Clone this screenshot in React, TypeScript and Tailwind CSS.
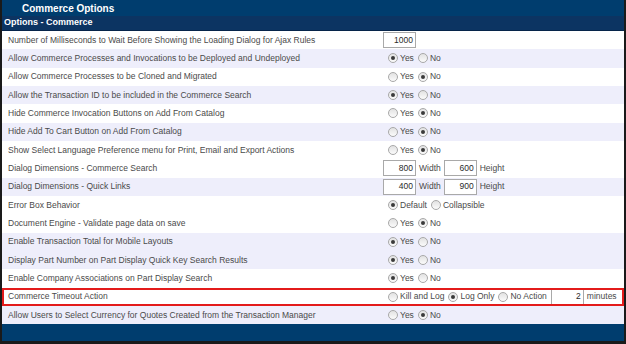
import React from "react";

type Row = {
  label: string;
  shade?: boolean;
  kind: "yesno" | "number" | "dims" | "errorbox" | "timeout";
  value?: string;
  w?: string;
  h?: string;
  yes?: boolean;
  highlight?: boolean;
};

const rows: Row[] = [
  { label: "Number of Milliseconds to Wait Before Showing the Loading Dialog for Ajax Rules", kind: "number", value: "1000" },
  { label: "Allow Commerce Processes and Invocations to be Deployed and Undeployed", kind: "yesno", yes: true, shade: true },
  { label: "Allow Commerce Processes to be Cloned and Migrated", kind: "yesno", yes: false },
  { label: "Allow the Transaction ID to be included in the Commerce Search", kind: "yesno", yes: true, shade: true },
  { label: "Hide Commerce Invocation Buttons on Add From Catalog", kind: "yesno", yes: false },
  { label: "Hide Add To Cart Button on Add From Catalog", kind: "yesno", yes: false, shade: true },
  { label: "Show Select Language Preference menu for Print, Email and Export Actions", kind: "yesno", yes: false },
  { label: "Dialog Dimensions - Commerce Search", kind: "dims", w: "800", h: "600" },
  { label: "Dialog Dimensions - Quick Links", kind: "dims", w: "400", h: "900", shade: true },
  { label: "Error Box Behavior", kind: "errorbox" },
  { label: "Document Engine - Validate page data on save", kind: "yesno", yes: false },
  { label: "Enable Transaction Total for Mobile Layouts", kind: "yesno", yes: true, shade: true },
  { label: "Display Part Number on Part Display Quick Key Search Results", kind: "yesno", yes: true, shade: true },
  { label: "Enable Company Associations on Part Display Search", kind: "yesno", yes: true },
  { label: "Commerce Timeout Action", kind: "timeout", highlight: true },
  { label: "Allow Users to Select Currency for Quotes Created from the Transaction Manager", kind: "yesno", yes: false, shade: true },
];

function Radio({ on }: { on?: boolean }) {
  return (
    <span className="inline-flex items-center justify-center w-[10px] h-[10px] rounded-full border border-[#a8a8a8] bg-gradient-to-b from-[#e2e2e2] to-[#fbfbfb] mr-[2px]">
      {on && <span className="w-[4px] h-[4px] rounded-full bg-[#3a3a3a]" />}
    </span>
  );
}

function Opt({ on, text }: { on?: boolean; text: string }) {
  return (
    <span className="inline-flex items-center mr-[4px]">
      <Radio on={on} />
      <span>{text}</span>
    </span>
  );
}

function Box({ v }: { v: string }) {
  return (
    <span className="inline-flex items-center justify-end w-[33px] h-[16px] border border-[#a9a9a9] bg-white pr-[2px] text-[#2a2a2a]">
      {v}
    </span>
  );
}

function Value({ r }: { r: Row }) {
  switch (r.kind) {
    case "number":
      return <Box v={r.value!} />;
    case "yesno":
      return (
        <span className="flex items-center pl-[5px]">
          <Opt on={r.yes} text="Yes" />
          <Opt on={!r.yes} text="No" />
        </span>
      );
    case "dims":
      return (
        <span className="flex items-center gap-[3px]">
          <Box v={r.w!} />
          <span>Width</span>
          <Box v={r.h!} />
          <span>Height</span>
        </span>
      );
    case "errorbox":
      return (
        <span className="flex items-center pl-[5px]">
          <Opt on text="Default" />
          <Opt text="Collapsible" />
        </span>
      );
    case "timeout":
      return (
        <span className="flex items-center pl-[5px]">
          <Opt text="Kill and Log" />
          <Opt on text="Log Only" />
          <Opt text="No Action" />
          <Box v="2" />
          <span className="ml-[3px]">minutes</span>
        </span>
      );
  }
}

export default function App() {
  return (
    <div className="w-[626px] h-[344px] bg-[#1a1a1a] px-[2px] pb-[3px] flex flex-col text-[8.5px] text-[#4a4a4a]" style={{ fontFamily: "Tahoma, 'Liberation Sans', Arial, sans-serif" }}>
      {/* title bar */}
      <div className="h-[16px] bg-[#003d6e] flex items-center pl-[20px] text-white font-bold text-[10px]">Commerce Options</div>
      {/* section bar */}
      <div className="h-[15px] bg-[#0c3462] flex items-center pl-[2px] text-white font-bold text-[9px] border-b border-[#06244a]">Options - Commerce</div>
      <div className="flex flex-col">
        {rows.map((r, i) => (
          <div
            key={i}
            className={`h-[18.33px] flex items-center ${r.shade ? "bg-[#eeeefb]" : "bg-white"} ${r.highlight ? "outline-2 outline-[#e31b1b] -outline-offset-2" : ""}`}
          >
            <div className="w-[381px] pl-[6px] whitespace-nowrap">{r.label}</div>
            <Value r={r} />
          </div>
        ))}
      </div>
      <div className="flex-1 bg-[#003d6e]" />
    </div>
  );
}
